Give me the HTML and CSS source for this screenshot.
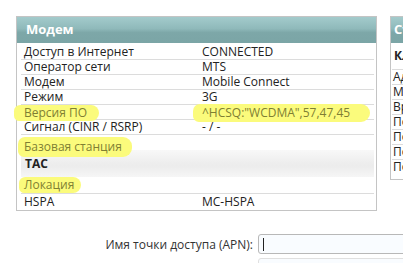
FILE: index.html
```html
<!DOCTYPE html>
<html lang="ru">
<head>
<meta charset="utf-8">
<link rel="stylesheet" href="styles.css">
</head>
<body>
<div class="top">
  <section class="panel panel-main">
    <div class="panel-head">Модем</div>
    <div class="rows">
      <div class="row first"><span class="k">Доступ в Интернет</span><span class="v">CONNECTED</span></div>
      <div class="row"><span class="k">Оператор сети</span><span class="v">MTS</span></div>
      <div class="row"><span class="k">Модем</span><span class="v">Mobile Connect</span></div>
      <div class="row"><span class="k">Режим</span><span class="v">3G</span></div>
      <div class="row"><span class="k"><span class="hl hl-a">Версия ПО</span></span><span class="v"><span class="hl hl-b">^HCSQ:"WCDMA",57,47,45</span></span></div>
      <div class="row"><span class="k">Сигнал (CINR / RSRP)</span><span class="v">- / -</span></div>
      <div class="row noline"><span class="k"><span class="hl hl-c">Базовая станция</span></span><span class="v"></span></div>
      <div class="subhead">TAC</div>
      <div class="row tall"><span class="k"><span class="hl hl-d">Локация</span></span><span class="v"></span></div>
      <div class="row last"><span class="k">HSPA</span><span class="v">MC-HSPA</span></div>
    </div>
  </section>
  <section class="panel panel-side">
    <div class="panel-head">Статус</div>
    <div class="rows side-rows">
      <div class="subhead side-sub">Клиенты</div>
      <div class="row"><span class="k">Адрес IP</span></div>
      <div class="row"><span class="k">MAC</span></div>
      <div class="row"><span class="k">Время</span></div>
      <div class="row"><span class="k">Порт 1</span></div>
      <div class="row"><span class="k">Порт 2</span></div>
      <div class="row"><span class="k">Порт 3</span></div>
      <div class="row noline"><span class="k">Порт 4</span></div>
    </div>
  </section>
</div>
<form class="form">
  <label class="label">Имя точки доступа (APN):</label>
  <div class="field"><span class="caret"></span></div>
  <span></span>
  <div class="field field-next"></div>
</form>
</body>
</html>
```
FILE: styles.css
```css
html, body {
  margin: 0;
  padding: 0;
  background: #fff;
  overflow: hidden;
}
body {
  font-family: "Open Sans", "DejaVu Sans", sans-serif;
  font-size: 12px;
  color: #222;
  width: 403px;
  height: 263px;
}
.top {
  display: flex;
  align-items: flex-start;
  gap: 13px;
  padding: 16px 0 0 16px;
  width: 700px;
}
.panel {
  border: 1px solid #c4c4c4;
  background: #fff;
  flex: none;
}
.panel-main {
  width: 359px;
}
.panel-side {
  width: 300px;
}
.panel-head {
  height: 26px;
  line-height: 25px;
  padding-left: 9px;
  color: #fff;
  font-weight: bold;
  font-size: 13px;
  background: linear-gradient(#a3cbcc 0%, #8fb9ba 45%, #7da7a8 60%, #7ba5a6 100%);
}
.panel-side .panel-head {
  padding-left: 3px;
}
.rows {
  padding: 1px 2px 1px 4px;
}
.row {
  display: flex;
  height: 14px;
  line-height: 14px;
  border-bottom: 1px solid #dcdcdc;
  white-space: nowrap;
}
.row.first {
  height: 15px;
  line-height: 16px;
}
.row.noline {
  border-bottom-color: transparent;
}
.row.tall {
  height: 16px;
  line-height: 16px;
}
.row.last {
  border-bottom: none;
  height: 15px;
  line-height: 15px;
}
.k {
  width: 178px;
  padding-left: 3px;
  flex: none;
}
.v {
  flex: 1;
}
.subhead {
  height: 27px;
  line-height: 27px;
  padding-left: 4px;
  font-weight: bold;
  background: linear-gradient(#f8f8f8 0%, #eeeeee 45%, #ececec 60%, #f6f6f6 100%);
}
.side-rows {
  padding: 0 0 4px 1px;
}
.side-sub {
  height: 26px;
  line-height: 26px;
  padding-left: 2px;
  border-bottom: 1px solid #dcdcdc;
  background: #fff;
}
.side-rows .k {
  padding-left: 1px;
}
.hl {
  display: inline-block;
  position: relative;
  color: #7f7f33;
  background: #fbfb7c;
  border-radius: 7px 9px 9px 6px;
  line-height: 16px;
  padding: 0 10px 0 10px;
  margin: 0 -10px 0 -10px;
}
.hl-a {
  padding-right: 12px;
}
.hl-b {
  padding: 1px 20px 1px 9px;
  margin: -1px -20px -1px -9px;
}
.hl-c {
  padding: 2px 10px 2px 6px;
  margin: 0 -10px 0 -6px;
  top: 2px;
}
.hl-d {
  padding: 0 7px 0 5px;
  margin: 0 -7px 0 -5px;
}
.form {
  display: grid;
  grid-template-columns: 253px 160px;
  column-gap: 5px;
  row-gap: 4px;
  margin-top: 23px;
  align-items: center;
}
.label {
  text-align: right;
  font-size: 12px;
  color: #333;
}
.field {
  height: 18px;
  border: 1px solid #b8b8b8;
  border-radius: 3px;
  background: #f9fcff;
  display: flex;
  align-items: center;
  padding-left: 4px;
}
.caret {
  width: 1px;
  height: 13px;
  background: #222;
}
.field-next {
  border-color: #e0e0e0;
}
```
